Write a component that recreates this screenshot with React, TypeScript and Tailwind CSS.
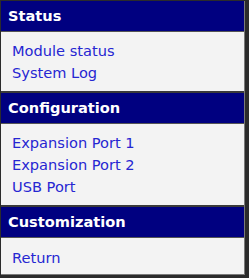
import React from 'react';

const sections = [
  { title: 'Status', links: ['Module status', 'System Log'] },
  { title: 'Configuration', links: ['Expansion Port 1', 'Expansion Port 2', 'USB Port'] },
  { title: 'Customization', links: ['Return'] },
];

export default function App() {
  return (
    <div
      className="w-[249px] h-[278px] bg-[#2b2b2b] pt-[1px] pl-[1px] pr-[4px] pb-[3px]"
      style={{ fontFamily: '"DejaVu Sans", Verdana, sans-serif' }}
    >
      <div className="h-full flex flex-col bg-[#f3f3f3] border-r border-b border-[#7a7a7a]">
        {sections.map((s, i) => {
          const last = i === sections.length - 1;
          return (
            <div
              key={s.title}
              className={`flex flex-col ${i > 0 ? 'border-t-2 border-[#3a3a3a]' : ''} ${last ? 'flex-1' : ''}`}
            >
              <div className="bg-[#000080] text-white font-bold text-[14.6px] pl-[7px] flex items-center h-[31px] border-b border-[#555]">
                {s.title}
              </div>
              <ul className={`pl-[11px] ${last ? 'flex-1 pt-[9px]' : 'pt-[8px] pb-[7px]'}`}>
                {s.links.map((l) => (
                  <li key={l} className="leading-[22px] text-[14.6px]">
                    <a href="#" className="text-[#2626d2]">
                      {l}
                    </a>
                  </li>
                ))}
              </ul>
            </div>
          );
        })}
      </div>
    </div>
  );
}
